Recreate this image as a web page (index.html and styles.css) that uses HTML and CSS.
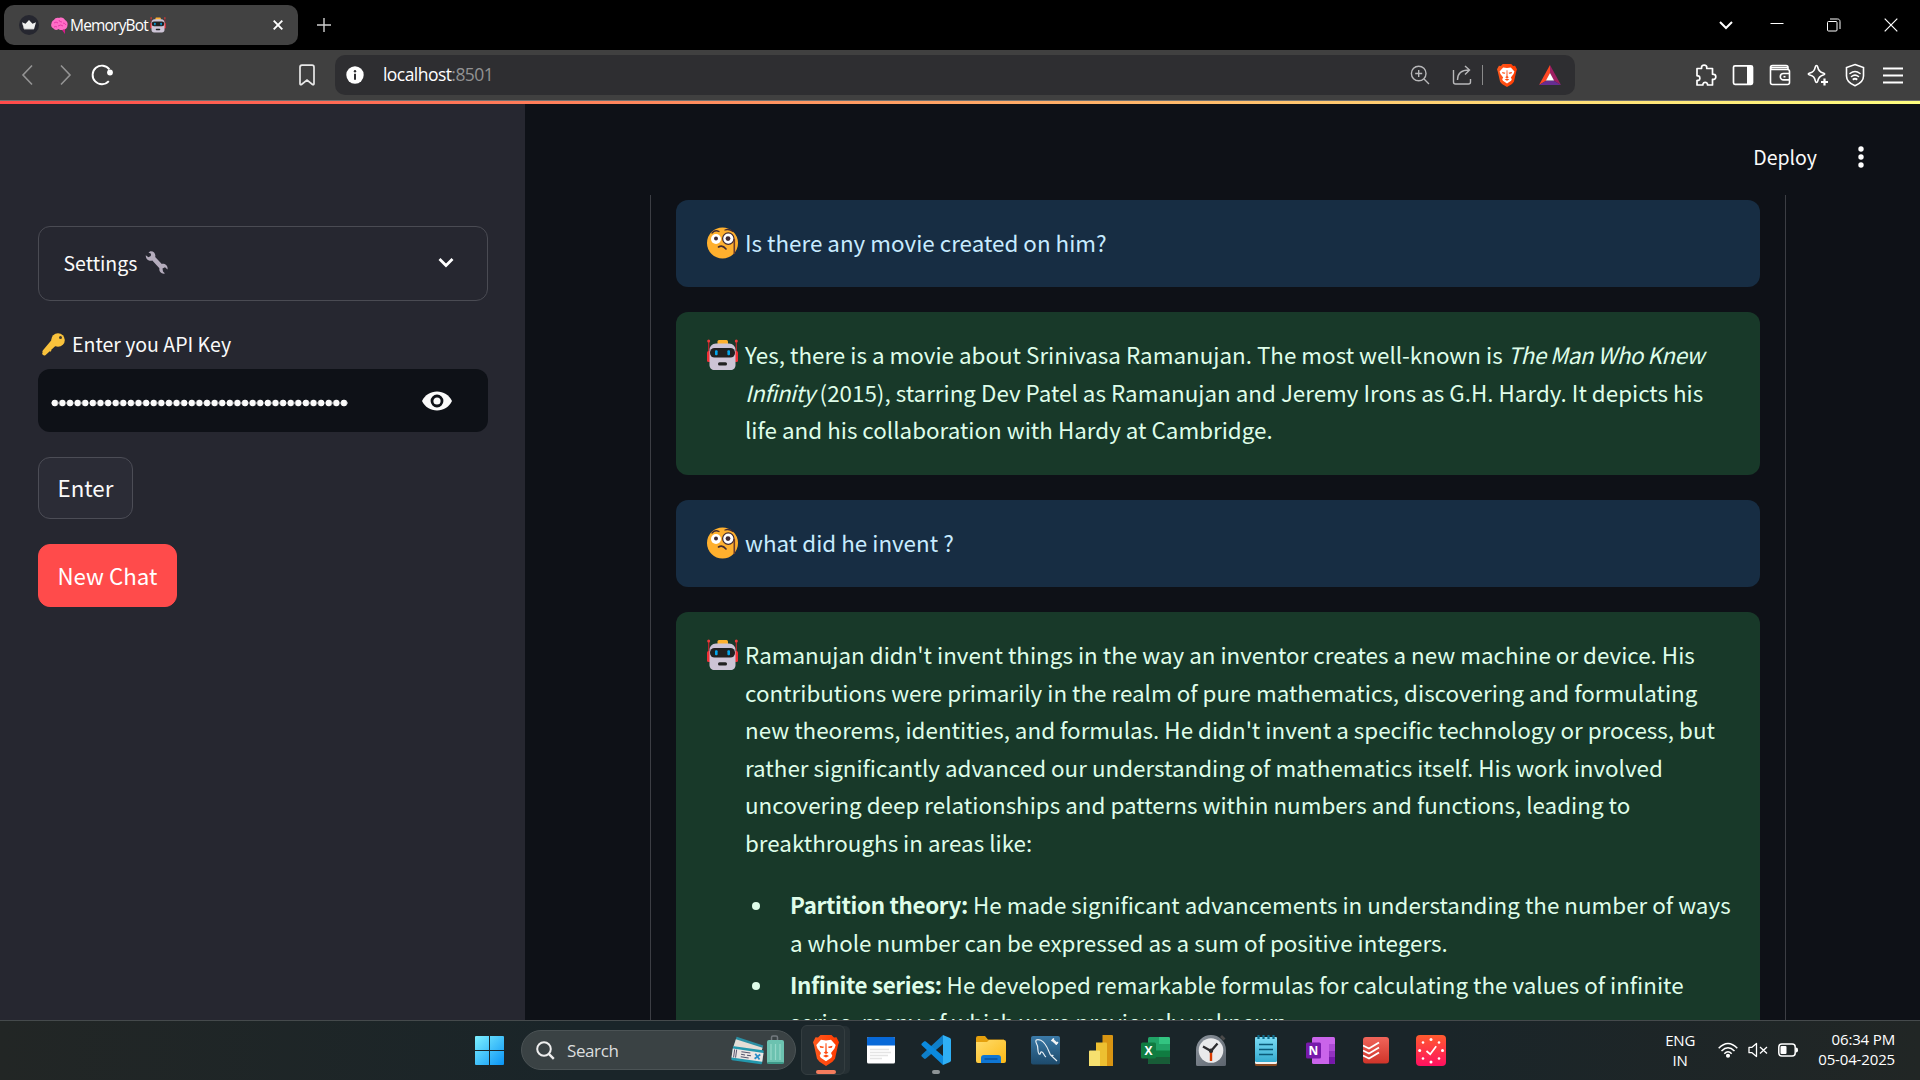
FILE: index.html
```html
<!DOCTYPE html>
<html lang="en">
<head>
<meta charset="utf-8">
<title>MemoryBot</title>
<link rel="stylesheet" href="styles.css">
</head>
<body>
<svg class="defs" width="0" height="0" aria-hidden="true">
  <defs>
    <linearGradient id="braveFill" x1="0" x2="1"><stop offset="0" stop-color="#ff5a1e"/><stop offset="1" stop-color="#ff3a00"/></linearGradient>
    <linearGradient id="winFill" x1="0" y1="0" x2="1" y2="1"><stop offset="0" stop-color="#7df0ff"/><stop offset="1" stop-color="#0a94f5"/></linearGradient>
    <linearGradient id="folderFill" x1="0" y1="0" x2="1" y2="1"><stop offset="0" stop-color="#ffdc6b"/><stop offset="1" stop-color="#fcb916"/></linearGradient>
    <linearGradient id="sqlFill" x1="0" y1="0" x2="0" y2="1"><stop offset="0" stop-color="#3b7aa8"/><stop offset="1" stop-color="#1d4a6b"/></linearGradient>
    <linearGradient id="clockFill" x1="0" y1="0" x2="1" y2="1"><stop offset="0" stop-color="#8c949c"/><stop offset="1" stop-color="#5d656e"/></linearGradient>
    <linearGradient id="noteFill" x1="0" y1="0" x2="0" y2="1"><stop offset="0" stop-color="#7cdcf5"/><stop offset="1" stop-color="#35acd0"/></linearGradient>
    <linearGradient id="todoFill" x1="0" y1="0" x2="0" y2="1"><stop offset="0" stop-color="#f0655a"/><stop offset="1" stop-color="#cf3429"/></linearGradient>
    <linearGradient id="tickFill" x1="0" y1="0" x2="0" y2="1"><stop offset="0" stop-color="#ff5b2e"/><stop offset="1" stop-color="#ff1060"/></linearGradient>
    <symbol id="robot" viewBox="0 0 31 32">
      <path d="M1.700 2v14M29.300 2v14" stroke="#c4252d" stroke-width="1.200"/>
      <circle cx="1.700" cy="2" r="1.500" fill="#f03a3a"/><circle cx="29.300" cy="2" r="1.500" fill="#f03a3a"/>
      <rect x="0" y="12" width="4" height="11" rx="1.500" fill="#f02f35"/><rect x="27" y="12" width="4" height="11" rx="1.500" fill="#f02f35"/>
      <rect x="10.500" y="1" width="10.500" height="6" rx="1.500" fill="#ffb02e"/>
      <path d="M9 4.500h13c4 0 6.500 3 6.500 6.500v15c0 3-2 5-5 5h-16c-3 0-5-2-5-5v-15c0-3.500 2.500-6.500 6.500-6.500z" fill="#cdc4d6"/>
      <rect x="3" y="9" width="25" height="9.500" rx="4.500" fill="#212121"/>
      <rect x="8" y="11.300" width="2.600" height="5" rx="1" fill="#00a6ed"/><rect x="20.400" y="11.300" width="2.600" height="5" rx="1" fill="#00a6ed"/>
      <rect x="11" y="23.300" width="9" height="3.200" rx="1.500" fill="#212121"/>
    </symbol>
    <symbol id="monocle" viewBox="0 0 31 32">
      <rect x="0" y="0.500" width="31" height="31" rx="15.500" fill="#ffb02e"/>
      <circle cx="9" cy="12" r="5" fill="#fff"/><circle cx="9" cy="11.600" r="2" fill="#402a32"/>
      <circle cx="21.300" cy="11.600" r="5.700" fill="#fff" stroke="#402a32" stroke-width="1.200"/><circle cx="21" cy="11.600" r="2.400" fill="#402a32"/>
      <path d="M5 6q3-3.500 7-1.500M18 3q4-1.500 8 1.500" stroke="#402a32" stroke-width="1.300" fill="none" stroke-linecap="round"/>
      <path d="M11.500 20q4-2.500 7.500 2" stroke="#402a32" stroke-width="1.600" fill="none" stroke-linecap="round"/>
      <path d="M27.300 12v15" stroke="#6b3b2c" stroke-width="1.600"/>
    </symbol>
    <symbol id="brave" viewBox="0 0 26 30">
      <path d="M7.500 0h11l2.500 2.500 2.500-.3L26 7l-1 3-3 13-2.500 3L13 30l-6.500-4L4 23 1 10 0 7l2.500-4.800 2.500.3z" fill="url(#braveFill)"/>
      <path d="M8 4.500l5 .8 5-.8 4.700 5.200-1.200 3.300-3.500 4.500 1.300 2.500-1 2L13 25.500 7.700 22l-1-2L8 17.500 4.500 13 3.300 9.700z" fill="#fff"/>
      <path d="M6.500 10.300l4.500 1-.8 1.400-3-.4zM19.500 10.300l-4.500 1 .8 1.400 3-.4zM12.500 8h1l.2 8 1.700 1.200L13 18.500l-2.400-1.300 1.700-1.200zM10 20.300l3-1.400 3 1.400-3 1.500z" fill="url(#braveFill)"/>
    </symbol>
  </defs>
</svg>

<header class="tabstrip">
  <div class="tab">
    <svg class="favicon" width="20" height="20" viewBox="0 0 20 20"><circle cx="10" cy="10" r="10" fill="#262730"/><path d="M3 7.300l3.500 1.400L10 5l3.500 3.700L17 7.300l-2 7H5z" fill="#f0f0f0"/><path d="M3 7.300l2.500 6.400h9.200l-.2.600H5z" fill="#aaa"/></svg>
    <svg width="17" height="17" viewBox="0 0 17 17"><path d="M11 13l3 4V12z" fill="#d51b8a"/><path d="M3 3C4 1 6 .5 8 1c3-1 5 0 6 2 2 1 3 3 2.500 5 0 3-2 4.500-4 4.500-2 1-4 .5-5-.5-2 1.500-4 1-5-.5C0 10.500-.2 8 .5 6.500.5 5 1.500 3.500 3 3z" fill="#ff6dc6"/><path d="M3 6q2-2 4 0M8 3q0 2 3 2M7 9q3-2 5 0M12 6q2 0 3 2M3 10q2-1 3 0" stroke="#df2ba0" fill="none" stroke-width=".8"/></svg>
    <span class="tab-title">MemoryBot</span>
    <svg class="tab-robot" width="16" height="16"><use href="#robot"/></svg>
    <svg class="tab-close" width="10" height="10" viewBox="0 0 10 10"><path d="M.7.700l8.600 8.600M9.300.700L.700 9.300" stroke="#fff" stroke-width="1.900"/></svg>
  </div>
  <svg class="new-tab" width="14" height="14" viewBox="0 0 14 14"><path d="M7 0v14M0 7h14" stroke="#d0d0d0" stroke-width="1.400"/></svg>
  <div class="win-buttons">
    <svg class="tab-menu" width="14" height="14" viewBox="0 0 14 14"><path d="M1 4l6 6 6-6" stroke="#fff" stroke-width="2" fill="none"/></svg>
    <svg width="14" height="14" viewBox="0 0 14 14"><path d="M.5 5.500h13" stroke="#fff"/></svg>
    <svg width="14" height="14" viewBox="0 0 14 14" fill="none" stroke="#fff"><rect x=".5" y="3.500" width="9.500" height="9.500" rx="1"/><path d="M3 1h7.500c1.500 0 2.500 1 2.500 2.500V11"/></svg>
    <svg width="14" height="14" viewBox="0 0 14 14"><path d="M.7.700l12.600 12.600M13.300.700L.700 13.300" stroke="#fff" stroke-width="1.200"/></svg>
  </div>
</header>

<nav class="toolbar">
  <div class="nav-buttons">
    <svg width="20" height="22" viewBox="0 0 20 22"><path d="M14 1.500L5 11l9 9.500" stroke="#949494" stroke-width="1.600" fill="none"/></svg>
    <svg width="20" height="22" viewBox="0 0 20 22"><path d="M6 1.500l9 9.500-9 9.500" stroke="#949494" stroke-width="1.600" fill="none"/></svg>
    <svg class="reload" width="24" height="22" viewBox="0 0 24 22"><path d="M18.800 17.200a9.300 9.300 0 1 1 .6-11.800" stroke="#fff" stroke-width="1.900" fill="none"/><circle cx="20" cy="8.500" r="2.900" fill="#fff"/></svg>
  </div>
  <svg class="bookmark" width="16" height="22" viewBox="0 0 16 22"><path d="M3 1.200h10a2 2 0 0 1 2 2v16.600c0 .8-.8 1.200-1.500.7L8 16.200l-5.500 4.300c-.7.500-1.500.1-1.500-.7V3.200a2 2 0 0 1 2-2z" stroke="#e8e8e8" stroke-width="1.700" fill="none"/></svg>
  <div class="address">
    <svg width="18" height="18" viewBox="0 0 18 18"><circle cx="9" cy="9" r="8.700" fill="#fff"/><circle cx="9" cy="5.200" r="1.200" fill="#2e2e31"/><path d="M9 7.700v6" stroke="#2e2e31" stroke-width="2"/></svg>
    <span class="url">localhost<span class="port">:8501</span></span>
    <div class="address-tools">
      <svg width="20" height="20" viewBox="0 0 20 20" fill="none" stroke="#b8b8ba" stroke-width="1.400"><circle cx="8.700" cy="8.500" r="7.300"/><path d="M14 14l5 5M8.700 5v7M5.200 8.500h7"/></svg>
      <svg width="20" height="20" viewBox="0 0 20 20" fill="none" stroke="#b8b8ba" stroke-width="1.400"><path d="M1.500 5v12a2 2 0 0 0 2 2h13a2 2 0 0 0 2-2v-3M5.500 15C5.500 9 9 5 17 5M13 1l4.500 4-4.500 4.500"/></svg>
      <span class="divider"></span>
      <svg width="20" height="23"><use href="#brave"/></svg>
      <svg width="22" height="20" viewBox="0 0 22 20"><path d="M11 0L0 20l7.500-4.500L11 8z" fill="#ff4724"/><path d="M11 0l11 20-7.500-4.500L11 8z" fill="#9e1f63"/><path d="M0 20h22l-7.500-4.500h-7z" fill="#662d91"/><path d="M11 8l4 7.500H7z" fill="#fff"/></svg>
    </div>
  </div>
  <div class="actions">
    <svg width="22" height="22" viewBox="0 0 22 22" fill="none" stroke="#fff" stroke-width="1.700" stroke-linejoin="round"><path d="M2 4.500h4.500c.3-.5 0-1 .1-1.500.3-2.500 4.800-2.500 5.100 0 .1.500-.2 1 .1 1.500h5.700v5.700c.5.200 1 0 1.500.1 2.400.3 2.400 4.600 0 5-.5.100-1-.1-1.500.1V21h-5c-.2-.5.100-1-.1-1.300-.6-1.900-3.800-1.900-4.400 0-.2.300.1.800-.1 1.300H2v-4.500c.5-.2 1 .1 1.400-.1 2-.7 2-3.800 0-4.500-.4-.2-.9.100-1.400-.1z"/></svg>
    <svg width="22" height="22" viewBox="0 0 22 22"><rect x="1.500" y="1.800" width="19" height="18.500" rx="1.500" fill="none" stroke="#fff" stroke-width="1.700"/><path d="M15 2h5v18h-5z" fill="#fff"/></svg>
    <svg width="22" height="22" viewBox="0 0 22 22" fill="none" stroke="#fff" stroke-width="1.600"><path d="M19 5V3.500a2 2 0 0 0-2-2H3.500a2 2 0 0 0 0 4h15a2 2 0 0 1 2 2v11a2 2 0 0 1-2 2h-15a2 2 0 0 1-2-2V3.500M2 3.500h17M21 9.500h-6.500a3.200 3.200 0 0 0 0 6.400H21"/><path d="M14.500 12.700h2"/></svg>
    <svg width="22" height="22" viewBox="0 0 22 22" fill="none" stroke="#fff" stroke-width="1.600" stroke-linejoin="round"><path d="M9.500 1.500c.7 0 1 .7 1.200 1.500.7 3.500 1.800 5 5.500 6 2 .6 2 1.500 0 2.100-3.600 1-4.700 2.300-5.500 5.900-.5 2-1.800 2-2.300 0-.9-3.700-1.900-4.800-5.600-5.900-2-.6-2-1.500 0-2.100 3.700-1.100 4.700-2.400 5.500-6 .2-.8.500-1.500 1.200-1.500z"/><path d="M17.500 14.500v7M14 18h7" stroke-width="2.200"/></svg>
    <svg width="22" height="24" viewBox="0 0 22 24" fill="none" stroke="#fff" stroke-width="1.600" stroke-linecap="round"><path d="M11 1.500l8.500 3v8.500c0 4.500-3.500 7.700-8.500 9.700-5-2-8.500-5.200-8.500-9.700V4.500z"/><path d="M6 10.500q5-4 10 0M7.500 13.500q3.500-2.800 7 0"/><path d="M9.500 16.200q1.500-1 3 0" stroke-width="2"/></svg>
    <svg width="22" height="22" viewBox="0 0 22 22"><path d="M1 4.500h20M1 11.500h20M1 18.500h20" stroke="#fff" stroke-width="1.800"/></svg>
  </div>
</nav>

<div class="accent"></div>

<div class="app">
  <aside class="sidebar">
    <div class="expander">
      <span class="small">Settings</span>
      <svg class="wrench" width="23" height="23" viewBox="0 0 23 23"><path d="M3.500 1.500L5 .4c3.500-.6 6 2.200 5.200 5.500l6.600 7c3.500-.5 6.400 2 5.700 5.600l-2.500-2.300-2.500 1.300.5 3 2 2c-3.800.8-6.300-2-5.600-5.300L7.300 9.600C3.800 10.500.500 8 .800 4.200l2.600 2 2.400-1.200.2-2.200z" fill="#b4acbc"/></svg>
      <svg class="chevron" width="16" height="11" viewBox="0 0 16 11"><path d="M1.500 2L8 8.500 14.500 2" stroke="#fff" stroke-width="2.800" fill="none"/></svg>
    </div>
    <div class="field-label">
      <svg width="23" height="23" viewBox="0 0 23 23"><path d="M10.500 9L2.500 18.500M2.300 20.500L12 11.500" stroke="#f9c23c" stroke-width="4" stroke-linecap="round"/><path d="M6.500 16.500l2.500 1.500" stroke="#f9c23c" stroke-width="2"/><circle cx="16" cy="7" r="6.800" fill="#f9c23c"/><circle cx="18.500" cy="4.500" r="1.500" fill="#433b2a"/></svg>
      <span class="small">Enter you API Key</span>
    </div>
    <div class="password">
      <span class="mask"></span>
      <svg width="30" height="20" viewBox="0 0 30 20"><path d="M15 .5c6.500 0 12 3.500 15 9.500-3 6-8.500 9.500-15 9.500S3 16 0 10C3 4 8.500.5 15 .5z" fill="#fafafa"/><circle cx="15" cy="10" r="5" fill="#fafafa" stroke="#0e1117" stroke-width="2.800"/></svg>
    </div>
    <button class="btn">Enter</button>
    <button class="btn primary">New Chat</button>
  </aside>

  <main class="main">
    <div class="app-bar">
      <span class="small">Deploy</span>
      <svg width="6" height="22" viewBox="0 0 6 22" fill="#fff"><circle cx="3" cy="3" r="2.700"/><circle cx="3" cy="11" r="2.700"/><circle cx="3" cy="19" r="2.700"/></svg>
    </div>
    <section class="chat">
      <article class="msg user">
        <svg class="avatar" width="31" height="32"><use href="#monocle"/></svg>
        <div class="text"><p>Is there any movie created on him?</p></div>
      </article>
      <article class="msg bot">
        <svg class="avatar" width="31" height="32"><use href="#robot"/></svg>
        <div class="text"><p>Yes, there is a movie about Srinivasa Ramanujan. The most well-known is <em>The Man Who Knew</em><br><em>Infinity</em> (2015), starring Dev Patel as Ramanujan and Jeremy Irons as G.H. Hardy. It depicts his<br>life and his collaboration with Hardy at Cambridge.</p></div>
      </article>
      <article class="msg user">
        <svg class="avatar" width="31" height="32"><use href="#monocle"/></svg>
        <div class="text"><p>what did he invent ?</p></div>
      </article>
      <article class="msg bot">
        <svg class="avatar" width="31" height="32"><use href="#robot"/></svg>
        <div class="text">
          <p>Ramanujan didn't invent things in the way an inventor creates a new machine or device. His<br>contributions were primarily in the realm of pure mathematics, discovering and formulating<br>new theorems, identities, and formulas. He didn't invent a specific technology or process, but<br>rather significantly advanced our understanding of mathematics itself. His work involved<br>uncovering deep relationships and patterns within numbers and functions, leading to<br>breakthroughs in areas like:</p>
          <ul>
            <li><b>Partition theory:</b> He made significant advancements in understanding the number of ways<br>a whole number can be expressed as a sum of positive integers.</li>
            <li><b>Infinite series:</b> He developed remarkable formulas for calculating the values of infinite<br>series, many of which were previously unknown.</li>
          </ul>
        </div>
      </article>
    </section>
  </main>
</div>

<footer class="taskbar">
  <svg class="start" width="29" height="29" viewBox="0 0 29 29"><path d="M0 1a1 1 0 0 1 1-1h13v14H0zM15 0h13a1 1 0 0 1 1 1v13H15zM0 15h14v14H1a1 1 0 0 1-1-1zM15 15h14v13a1 1 0 0 1-1 1H15z" fill="url(#winFill)"/></svg>
  <div class="search">
    <svg width="19" height="19" viewBox="0 0 19 19" fill="none" stroke="#eee" stroke-width="2"><circle cx="8" cy="8" r="6.800"/><path d="M12.800 12.800l5 5" stroke-width="2.400"/></svg>
    <span>Search</span>
    <svg class="travel" width="54" height="30" viewBox="0 0 54 30">
      <g transform="rotate(18 6 4)"><rect x="5" y="2" width="28" height="12" fill="#2b8fa3"/><rect x="5" y="4.500" width="28" height="8" fill="#e4ded6"/></g>
      <g transform="rotate(8 1 12)"><rect x="2" y="11" width="31" height="14" rx="1" fill="#2398ad"/><rect x="2" y="13.500" width="31" height="9" fill="#ece6e4"/><path d="M4 14v8M6 14v8M11 15.500h9M11 18h4M17 18h4M11 20.500h8" stroke="#55556e" stroke-width="1"/><path d="M25 15.500l5 5M30 15.500l-5 5" stroke="#2b8fc8" stroke-width="1.800"/></g>
      <path d="M40.500 6V2.500q0-1.500 1.500-1.500h3q1.500 0 1.500 1.500V6" stroke="#73797e" stroke-width="1.500" fill="none"/><rect x="36" y="5" width="17" height="24" rx="2" fill="#6cc2b0"/><path d="M40 9v16M44.500 9v16M49 9v16" stroke="#94d8c9" stroke-width="1.200"/><path d="M36.500 28h16" stroke="#2f8c7d" stroke-width="1.500"/>
    </svg>
  </div>
  <div class="apps">
    <div class="app-icon active"><svg width="26" height="31" viewBox="0 0 26 30" preserveAspectRatio="none"><use href="#brave" width="26" height="30"/></svg></div>
    <div class="app-icon"><svg width="28" height="28" viewBox="0 0 28 28"><rect y="1" width="28" height="26.500" rx="1.500" fill="#fff"/><path d="M0 9.500V2.500A1.500 1.500 0 0 1 1.500 1h25A1.500 1.500 0 0 1 28 2.500v7z" fill="#0869d8"/><path d="M3 13.500h19M3 16.500h21M3 19.500h18M3 22.500h12" stroke="#e4e4e4" stroke-width="1.500"/></svg></div>
    <div class="app-icon running"><svg width="30" height="30" viewBox="0 0 30 30"><path d="M22 0L1 19.500c-.8.700-.8 1.500 0 2.200L3 23.500c.6.500 1.200.5 1.900 0L22 9z" fill="#0f7fc9"/><path d="M22 30L1 10.500C.2 9.800.2 9 1 8.300L3 6.500c.6-.5 1.200-.5 1.900 0L22 21z" fill="#0b8ade"/><path d="M22 0l7 3c.6.300 1 .9 1 1.500v21c0 .6-.4 1.200-1 1.500l-7 3z" fill="#2fb0f6"/></svg></div>
    <div class="app-icon"><svg width="30" height="28" viewBox="0 0 30 28"><path d="M0 2a2 2 0 0 1 2-2h7l3 3.500h16V14H0z" fill="#e5a00d"/><path d="M0 6h11l2-2h15a2 2 0 0 1 2 2v19a2 2 0 0 1-2 2H2a2 2 0 0 1-2-2z" fill="url(#folderFill)"/><path d="M5 27v-5a3 3 0 0 1 3-3h14a3 3 0 0 1 3 3v5z" fill="#0f76d3"/><path d="M8.500 23h13" stroke="#07509a" stroke-width="1.400"/></svg></div>
    <div class="app-icon"><svg width="29" height="30" viewBox="0 0 29 30"><rect y="1" width="29" height="28.500" rx="2" fill="url(#sqlFill)"/><path d="M5 5c3-1.500 7 1 9 4 3 4 4 8 5.500 11l6.500 6M5 5c-1 2 1 4 1.500 6s0 6 1.500 8c2 1 1-3 3-2s2 4 4 5M19.500 20l3 .5" stroke="#e5edf3" stroke-width="1.200" fill="none"/><path d="M21 4.500l5 4.500" stroke="#f4f4f4" stroke-width="2.400"/><path d="M20.500 6l2.500-2.500M25 9.500l2-2.500" stroke="#f4f4f4" stroke-width="1.300"/></svg></div>
    <div class="app-icon"><svg width="24" height="31" viewBox="0 0 24 31"><path d="M13.500 0H23a1 1 0 0 1 1 1v30H13.500z" fill="#d99512"/><path d="M7 7.500h10a1 1 0 0 1 1 1V31H7z" fill="#edc031"/><path d="M0 16.500a1 1 0 0 1 1-1h9a1 1 0 0 1 1 1V31H0z" fill="#f6e06f"/></svg></div>
    <div class="app-icon"><svg width="29" height="29" viewBox="0 0 29 29"><rect x="7" y="1" width="22" height="27" rx="1.500" fill="#21a366"/><path d="M18 1h9.500A1.500 1.500 0 0 1 29 2.500V8H18z" fill="#33c481"/><path d="M7 14.500h22V21H7z" fill="#107c41"/><path d="M7 21h22v5.500a1.500 1.500 0 0 1-1.500 1.500h-19A1.500 1.500 0 0 1 7 26.500z" fill="#185c37"/><rect y="6.500" width="15" height="16" rx="1.500" fill="#107c41"/><text x="7.500" y="19" class="office">X</text></svg></div>
    <div class="app-icon"><svg width="30" height="31" viewBox="0 0 30 31"><path d="M24 2l2-2 3.500 3.500-2 2z" fill="#4a4a4a"/><path d="M0 15A15 15 0 0 1 30 15v14.500a1.500 1.500 0 0 1-1.500 1.500h-27A1.500 1.500 0 0 1 0 29.500z" fill="url(#clockFill)"/><circle cx="15" cy="15.500" r="12.300" fill="#e9eaeb"/><path d="M7 11.500l8 4.500 6.500-7.500" stroke="#2c2c2e" stroke-width="2.300" fill="none"/><path d="M15 16v10" stroke="#d83b01" stroke-width="2.400"/><circle cx="15" cy="15.700" r="2.200" fill="#2c2c2e"/></svg></div>
    <div class="app-icon"><svg width="22" height="31" viewBox="0 0 22 31"><rect y="2" width="22" height="29" rx="1.500" fill="#8b4c22"/><rect y="2" width="22" height="27" rx="1.500" fill="#f4f2ef"/><rect y="2" width="22" height="25" rx="1.500" fill="url(#noteFill)"/><path d="M3.500 0v4M8.500 0v4M13.500 0v4M18.500 0v4" stroke="#106d8c" stroke-width="2.200"/><path d="M4 9.500h14M4 14.500h14M4 19.500h14" stroke="#0b5a78" stroke-width="1.700"/></svg></div>
    <div class="app-icon"><svg width="29" height="29" viewBox="0 0 29 29"><rect x="6" y="1" width="23" height="27" rx="1.500" fill="#ca64ea"/><path d="M23 8h6v7h-6z" fill="#ae4bd5"/><path d="M23 15h6v6h-6z" fill="#9332bf"/><path d="M23 21h6v5.500a1.500 1.500 0 0 1-1.500 1.500H23z" fill="#7719aa"/><rect y="6.500" width="15" height="16" rx="1.500" fill="#7719aa"/><text x="7.500" y="19" class="office">N</text></svg></div>
    <div class="app-icon"><svg width="26" height="27" viewBox="0 0 26 27"><rect width="26" height="26.500" rx="3" fill="url(#todoFill)"/><path d="M0 8.500l6 3 10-6M0 13.500l6 3 10-6M0 18.500l6 3 10-6" stroke="#fff" stroke-width="1.900" fill="none"/></svg></div>
    <div class="app-icon"><svg width="30" height="31" viewBox="0 0 30 31"><rect width="30" height="31" rx="4" fill="url(#tickFill)"/><path d="M10.500 16l3.700 3.200 6-8" stroke="#fff" stroke-width="1.700" fill="none"/><g fill="#fff"><circle cx="15" cy="4.500" r="1.500"/><circle cx="15" cy="27" r="1.500"/><circle cx="3.700" cy="15.500" r="1.500"/><circle cx="26.500" cy="15.500" r="1.500"/><circle cx="7" cy="7.500" r="1.300"/><circle cx="23" cy="7.500" r="1.300"/><circle cx="7" cy="23.500" r="1.300"/><circle cx="23" cy="23.500" r="1.300"/></g></svg></div>
  </div>
  <div class="tray">
    <div class="lang">ENG<br>IN</div>
    <svg width="20" height="16" viewBox="0 0 20 16" fill="none" stroke="#fff" stroke-width="1.500"><path d="M.7 6.200q9.300-9.500 18.600 0M3.500 9q6.500-6.500 13 0M6.300 11.700q3.700-3.800 7.400 0"/><circle cx="10" cy="13.700" r="1.300" fill="#fff"/></svg>
    <svg width="20" height="16" viewBox="0 0 20 16" fill="none" stroke="#fff" stroke-width="1.300"><path d="M1 5.300h3L8.500 1.500v13L4 10.700H1z" stroke-linejoin="round"/><path d="M12 5l7 6.500M19 5l-7 6.500"/></svg>
    <svg width="20" height="14" viewBox="0 0 20 14"><rect x=".8" y="1" width="16.400" height="12" rx="3" fill="none" stroke="#fff" stroke-width="1.500"/><rect x="2.500" y="3" width="6" height="8" rx="1" fill="#fff"/><path d="M18 4.500a2 2 0 0 1 2 2v1a2 2 0 0 1-2 2z" fill="#fff"/></svg>
    <div class="clock">06:34 PM<br>05-04-2025</div>
  </div>
</footer>
</body>
</html>
```
FILE: styles.css
```css
* { box-sizing: border-box; }

body {
  margin: 0;
  width: 1920px;
  height: 1080px;
  overflow: hidden;
  display: flex;
  flex-direction: column;
  background: #0e1117;
  color: #fafafa;
  font-family: "Noto Sans CJK SC", sans-serif;
}

svg { display: block; flex: none; }
.defs { position: absolute; }

/* browser tab strip */
.tabstrip {
  flex: none;
  height: 50px;
  display: flex;
  align-items: center;
  padding-left: 4px;
  background: #000;
}

.tab {
  width: 294px;
  height: 40px;
  display: flex;
  align-items: center;
  padding: 0 15px 0 15px;
  border-radius: 10px;
  background: #424242;
  font: 15.500px "Open Sans", sans-serif;
}

.favicon { margin-right: 12px; }
.tab-title { margin-left: 2px; padding-bottom: 1px; color: #fff; letter-spacing: -0.800px; white-space: nowrap; }
.tab-robot { margin-left: 2px; }
.tab-close { margin-left: auto; }
.new-tab { margin-left: 19px; }

.win-buttons {
  display: flex;
  gap: 43px;
  margin-left: auto;
  padding-right: 22px;
}

.tab-menu { margin-right: -6px; }

/* address bar row */
.toolbar {
  flex: none;
  height: 50px;
  display: flex;
  align-items: center;
  padding-left: 18px;
  background: #404040;
}

.nav-buttons { display: flex; gap: 17px; width: 281px; }
.reload { margin-left: -2px; }

.address {
  width: 1240px;
  height: 40px;
  margin-left: 20px;
  padding: 0 14px 0 11px;
  display: flex;
  align-items: center;
  border-radius: 10px;
  background: #2e2e31;
}

.url { margin-left: 19px; padding-bottom: 2px; font: 17.500px "Open Sans", sans-serif; color: #fff; letter-spacing: -0.550px; }
.port { color: #929293; }
.address-tools { display: flex; align-items: center; margin-left: auto; }
.address-tools svg + svg { margin-left: 22px; }
.divider { width: 1px; height: 20px; margin: 0 14px 0 10px; background: #8a8a8a; }

.actions { display: flex; align-items: center; gap: 15.400px; margin-left: auto; padding-right: 16.500px; }

.accent {
  flex: none;
  height: 4px;
  border-top: 1px solid #707070;
  background: linear-gradient(90deg, #ff4b4b, #ffff80) padding-box;
}

/* application */
.app { flex: none; height: 916px; display: flex; overflow: hidden; }

.small { font-size: 19.500px; line-height: 30px; white-space: nowrap; }

.sidebar {
  width: 525px;
  padding: 122px 37px 0 38px;
  display: flex;
  flex-direction: column;
  align-items: flex-start;
  background: #262730;
}

.expander {
  width: 450px;
  height: 75px;
  display: flex;
  align-items: center;
  padding: 0 33.500px 2px 24.500px;
  border: 1px solid #4a4b53;
  border-radius: 12px;
}

.wrench { margin-left: 8px; }
.chevron { margin-left: auto; }

.field-label { display: flex; align-items: center; gap: 7px; margin: 28px 0 10px 4px; height: 30px; }

.password {
  width: 450px;
  height: 63px;
  display: flex;
  align-items: center;
  justify-content: space-between;
  padding: 0 36.500px 0 12.800px;
  border-radius: 12px;
  background: #0e1117;
}

/* one repeating dot for each hidden character */
.mask {
  width: 297px;
  height: 8px;
  margin-top: 4px;
  background: radial-gradient(circle at center, #fafafa 3px, transparent 3.700px) 0 0 / 7.615px 8px repeat-x;
}

.btn {
  height: 62px;
  margin-top: 25px;
  padding: 0 18.500px 3px;
  border: 1px solid #4c4d56;
  border-radius: 12px;
  background: #2b2c36;
  color: #fafafa;
  font: 22.300px/38px "Noto Sans CJK SC", sans-serif;
  white-space: nowrap;
}

.btn.primary { height: 63px; padding-bottom: 1px; border-color: #ff4b4b; background: #ff4b4b; color: #fff; }

.main { flex: 1; display: flex; flex-direction: column; align-items: flex-start; padding-left: 125px; }

.app-bar {
  flex: none;
  width: 1270px;
  height: 91px;
  display: flex;
  align-items: center;
  justify-content: flex-end;
  gap: 40.500px;
  padding: 15px 56.500px 0 0;
}

.chat {
  width: 1136px;
  flex: 1;
  min-height: 0;
  overflow: hidden;
  display: flex;
  flex-direction: column;
  gap: 25px;
  padding: 4.700px 25px 0;
  border: solid #3c3e44;
  border-width: 0 1px;
}

.msg {
  flex: none;
  display: flex;
  align-items: flex-start;
  gap: 7px;
  padding: 24px 0 26px 31px;
  border-radius: 12px;
  font-size: 22.400px;
  line-height: 37.500px;
  white-space: nowrap;
}

.msg p { margin: 0; }
.msg em { letter-spacing: -0.500px; }
.msg b { letter-spacing: -0.350px; }
.user { background: #172d43; color: #c7ebff; }
.bot { background: #183929; color: #dffde9; }
.avatar { margin-top: 3px; }

.msg ul { margin: 25px 0 0; padding-left: 45px; list-style: none; }
.msg li { position: relative; margin-bottom: 4.600px; }
.msg li::before {
  content: "";
  position: absolute;
  left: -38.500px;
  top: 16px;
  width: 8px;
  height: 8px;
  border-radius: 50%;
  background: currentColor;
}

/* desktop taskbar */
.taskbar {
  flex: none;
  height: 60px;
  display: flex;
  align-items: center;
  padding: 0 25px 1px 475px;
  border-top: 1px solid #454a4c;
  background: linear-gradient(90deg, #222625, #1a2529 30%, #1a2529 75%, #212625);
  font-family: "Open Sans", sans-serif;
}

.search {
  width: 275px;
  height: 40px;
  margin-left: 17px;
  padding: 0 10px 0 14px;
  display: flex;
  align-items: center;
  border: 1px solid #4b5355;
  border-radius: 20px;
  background: #3a4244;
  font-size: 17px;
  color: #dcdedf;
}

.search span { margin-left: 12px; letter-spacing: -0.400px; }
.travel { margin-left: auto; }

.apps { display: flex; margin-left: 2px; }

.app-icon {
  position: relative;
  width: 55px;
  height: 50px;
  display: flex;
  align-items: center;
  justify-content: center;
}

.active::before {
  content: "";
  position: absolute;
  inset: 0 8px 0 3px;
  border: 1px solid #343d40;
  border-radius: 6px;
  background: #263034;
  box-shadow: 6px 0 0 -1px #263034;
}

.active svg { position: relative; }

.active::after, .running::after {
  content: "";
  position: absolute;
  bottom: 1px;
  left: 18px;
  width: 20px;
  height: 4px;
  border-radius: 2px;
  background: #f47c5d;
}

.running::after { left: 24px; width: 8px; background: #8d9496; }

.office { font: bold 12px "Open Sans", sans-serif; fill: #fff; text-anchor: middle; }

.tray { display: flex; align-items: center; margin-left: auto; gap: 10px; font-size: 15px; line-height: 20px; color: #fff; letter-spacing: -0.150px; }
.lang { text-align: center; margin-right: 13px; padding-bottom: 1px; }
.clock { text-align: right; margin-left: 10px; padding-bottom: 3px; }
```
